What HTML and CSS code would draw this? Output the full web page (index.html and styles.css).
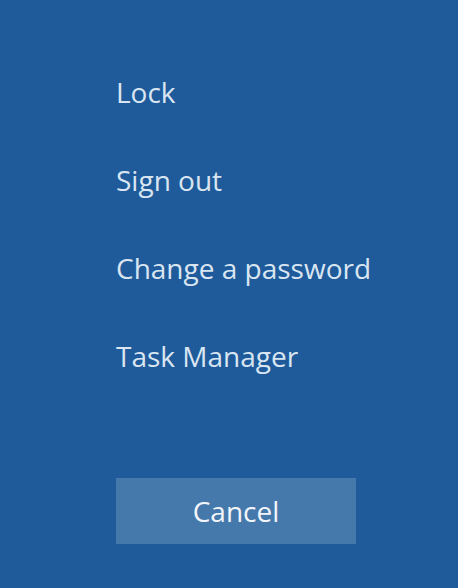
FILE: index.html
```html
<!DOCTYPE html>
<html lang="en">
<head>
    <meta charset="UTF-8">
    <title>Security options</title>
    <link rel="stylesheet" href="styles.css">
</head>
<body>

<div class="screen">
    <ul class="options">
        <li><a href="#">Lock</a></li>
        <li><a href="#">Sign out</a></li>
        <li><a href="#">Change a password</a></li>
        <li><a href="#">Task Manager</a></li>
    </ul>
    <button class="cancel">Cancel</button>
</div>

</body>
</html>
```
FILE: styles.css
```css
body {
    margin: 0;
    background-color: #1f5a9a;
    font-family: "Open Sans", "Noto Sans", sans-serif;
}
.screen {
    height: 588px;
    padding-left: 116px;
    padding-top: 70px;
    box-sizing: border-box;
    display: flex;
    flex-direction: column;
}
.options {
    list-style: none;
    margin: 0;
    padding: 0;
    display: flex;
    flex-direction: column;
    gap: 44px;
}
.options li {
    height: 44px;
    line-height: 44px;
}
.options a {
    color: #d9e6f2;
    text-decoration: none;
    font-size: 28px;
}
.cancel {
    margin-top: 100px;
    width: 240px;
    height: 66px;
    padding: 0;
    border: none;
    background-color: #4679ab;
    color: #f2f6fa;
    font-family: "Open Sans", "Noto Sans", sans-serif;
    font-size: 28px;
    cursor: pointer;
}
```
